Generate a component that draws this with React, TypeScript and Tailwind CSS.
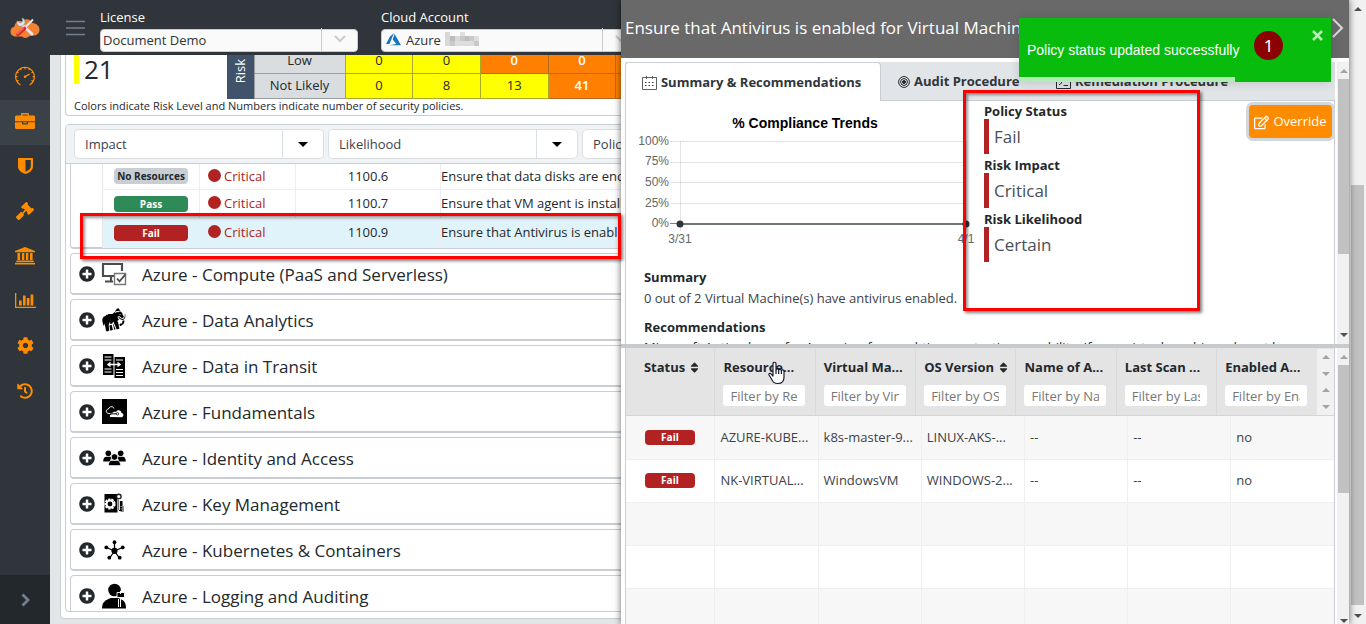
import React from "react";
import { SlSpeedometer } from "react-icons/sl";
import { FaGavel, FaCog, FaHistory, FaPlusCircle, FaRegEdit, FaSort } from "react-icons/fa";
import { GiMammoth } from "react-icons/gi";

const sans = "font-['Open_Sans','Noto_Sans',sans-serif]";

/* ---------- icons ---------- */

const Logo = () => (
  <svg width="30" height="22" viewBox="0 0 30 22" aria-hidden="true">
    <path d="M6 19.500C2 19.500.5 17 .5 14.500.5 12 2 10 4.500 9.500 5 5 9 3 12 4.500 14 1.500 20 1 22.500 6c4 .5 7 3 7 6.500 0 4-3 6-6 6l-4 .5c-2 2.500-6 2.500-7.500.5z" fill="#f58233" />
    <path d="M12.500 8l9.500 9" stroke="#dfe6ee" strokeWidth="3" strokeLinecap="round" />
    <path d="M7 4c-.5 4 2.500 6.500 6 4.500 3-2 2.500-6.500-1-7.500l.8 3.500-2.300 1.500z" fill="#dfe6ee" stroke="#8694a5" strokeWidth=".6" />
    <path d="M23 2.500l-8 8" stroke="#e9edf1" strokeWidth="1.800" />
    <path d="M14.500 11.500l-6.500 6" stroke="#e32b2b" strokeWidth="3.600" strokeLinecap="round" />
    <path d="M13.500 11.200l-6 5.500" stroke="#ffb0a8" strokeWidth=".8" strokeLinecap="round" />
  </svg>
);

const Briefcase = () => (
  <svg width="20" height="16" viewBox="0 0 20 16" fill="currentColor" aria-hidden="true">
    <path fillRule="evenodd" d="M6 2.500V1.200C6 .5 6.500 0 7.200 0h5.600c.7 0 1.200.5 1.200 1.200v1.300h4.500c.8 0 1.500.7 1.500 1.500v4.200H0V4c0-.8.7-1.500 1.500-1.500zM7.500 1.500v1h5v-1z" />
    <path fillRule="evenodd" d="M0 9.200h7v1.600c0 .4.300.7.700.7h4.600c.4 0 .7-.3.700-.7V9.200h7v5.300c0 .8-.7 1.500-1.500 1.500h-17C.7 16 0 15.300 0 14.500zM8.300 9.200h3.400v1.100H8.300z" />
  </svg>
);

const Shield = () => (
  <svg width="15" height="16" viewBox="0 0 15 16" fill="currentColor" aria-hidden="true">
    <path fillRule="evenodd" d="M.5 0h14c.3 0 .5.200.5.500v8c0 4-4 6.500-7.500 7.500C4 15 0 12.500 0 8.500v-8C0 .2.200 0 .5 0zM7.500 2v11.700c2.500-1 5.300-2.700 5.300-5.400V2z" />
  </svg>
);

const Bank = () => (
  <svg width="20" height="18" viewBox="0 0 20 18" fill="currentColor" aria-hidden="true">
    <path d="M10 0l10 4v1.200H0V4zM2.500 6h2.600v7H2.500zM6.900 6h2.400v7H6.900zM10.900 6h2.400v7h-2.400zM15 6h2.600v7H15zM1.300 13.500h17.400v1.500H1.300zM0 15.700h20v1.800H0z" />
  </svg>
);

const BarChart = () => (
  <svg width="21" height="15" viewBox="0 0 21 15" fill="currentColor" aria-hidden="true">
    <path d="M0 0h1.300v13.700H21V15H0zM4 7.500h2.700v5H4zM8 2.500h2.600v10H8zM11.800 5h2.600v7.500h-2.600zM15.600 1.500h2.700v11h-2.700z" />
  </svg>
);

const AzureMark = () => (
  <svg width="15" height="13" viewBox="0 0 15 13" aria-hidden="true">
    <path d="M8 0L3.800 3.800 0 11h3.500zM8.600 1L6.700 6.400l3.600 4.500-7 1.300H15z" fill="#1b75bc" />
  </svg>
);

const ComputeIcon = () => (
  <svg width="26" height="24" viewBox="0 0 26 24" fill="none" stroke="#4d4d4d" aria-hidden="true">
    <path d="M13 14H2V2h19v7" strokeWidth="2.200" />
    <path d="M10 14v5M4 19.500h8" strokeWidth="2.200" />
    <path d="M13.500 11.500h11v11h-11z" stroke="#777" strokeWidth="1.400" fill="#fff" />
    <path d="M16 16.500l2.500 2.800 6-7" strokeWidth="1.800" />
  </svg>
);

const TransitIcon = () => (
  <svg width="24" height="25" viewBox="0 0 24 25" aria-hidden="true">
    <path d="M1 1h10.500v21H1zM12.500 4H23v21H12.500z" fill="#000" />
    <path d="M2.500 4h7M2.500 7h7M2.500 16h7M2.500 19h7M14 7h7M14 16.500h7M14 19.500h7M14 22.500h7" stroke="#fff" strokeWidth="1.100" />
    <path d="M6 11.500h12M8.500 9.500L6 11.500 8.500 13.500M15.500 9.500l2.500 2-2.500 2" stroke="#fff" strokeWidth="1.500" fill="none" />
  </svg>
);

const FundamentalsIcon = () => (
  <svg width="25" height="25" viewBox="0 0 25 25" aria-hidden="true">
    <path d="M0 0h25v25H0z" fill="#000" />
    <path d="M8.500 18c-1.500-1-.5-2.500 1-2.800.5-2 2.500-3 4.500-2.200 1.500-3 5.500-1.500 5.500 1 2.500.5 2.500 3.700 0 4.200z" fill="#fff" />
    <path d="M10 14.500H6.500C3.500 14 3.500 10.500 6.500 10 7.500 7 11 7 12 9.500" stroke="#fff" strokeWidth="1" fill="none" />
    <path d="M8 14.800h6.500" stroke="#000" strokeWidth="1" />
    <circle cx="15.500" cy="14.800" r="1.200" fill="none" stroke="#000" strokeWidth=".8" />
  </svg>
);

const PeopleIcon = () => (
  <svg width="23" height="16" viewBox="0 0 23 16" aria-hidden="true">
    <circle cx="5.300" cy="3.300" r="2.800" />
    <circle cx="17.700" cy="3.300" r="2.800" />
    <path d="M.2 11.500c0-3.500 1.500-4.800 3-4.800h4.500c.6 0 1 .2 1.300.6-1.300 1-1.800 2.500-1.600 4.200zM22.800 11.500c0-3.500-1.500-4.800-3-4.800h-4.500c-.6 0-1 .2-1.300.6 1.300 1 1.800 2.500 1.600 4.200z" />
    <circle cx="11.500" cy="7" r="3.300" stroke="#fff" strokeWidth=".8" />
    <path d="M5.500 15.500c0-3.500 1.500-5 3.200-5h5.600c1.700 0 3.200 1.500 3.200 5z" stroke="#fff" strokeWidth=".6" />
  </svg>
);

const KeyIcon = () => (
  <svg width="22" height="21" viewBox="0 0 22 21" aria-hidden="true">
    <path d="M1.500 1h13v18.500h-13zM16 8h3.500v10H16z" fill="#000" />
    <circle cx="7" cy="11" r="4.300" fill="#000" stroke="#fff" strokeWidth="2.600" strokeDasharray="2.200 .8" />
    <circle cx="7" cy="11" r="3.400" fill="none" stroke="#fff" strokeWidth="2" />
    <circle cx="15.800" cy="3.500" r="2.300" fill="#fff" stroke="#222" strokeWidth="1.400" />
    <path d="M15.800 6.500V17" stroke="#fff" strokeWidth="2.200" />
    <path d="M15.500 6.500V17" stroke="#333" strokeWidth=".7" />
    <path d="M17.500 13.500h3v5h-3M17.500 16h3" stroke="#888" strokeWidth="1" fill="none" />
  </svg>
);

const HubIcon = () => (
  <svg width="21" height="20" viewBox="0 0 21 20" aria-hidden="true">
    <path d="M10.500 11V3M10.500 11L2.500 7.500M10.500 11l8-3.500M10.500 11L6 17.500M10.500 11l4.500 6.500" stroke="#000" strokeWidth="1.300" />
    <g fill="#000">
      <circle cx="10.500" cy="10.800" r="3.100" />
      <circle cx="10.500" cy="2.200" r="1.900" />
      <circle cx="2.300" cy="7.400" r="1.900" />
      <circle cx="18.700" cy="7.400" r="1.900" />
      <circle cx="5.300" cy="17.700" r="1.900" />
      <circle cx="15.700" cy="17.700" r="1.900" />
    </g>
  </svg>
);

const AuditorIcon = () => (
  <svg width="25" height="26" viewBox="0 0 25 26" aria-hidden="true">
    <circle cx="12.500" cy="7" r="6.300" fill="#000" />
    <path d="M0 25.500c0-6 3-8.500 9-10.500h7c6 2 8 4.500 8 10.500z" fill="#000" />
    <path d="M15 9.500h7.500v5H15z" fill="#000" stroke="#fff" strokeWidth=".9" />
    <path d="M18.500 8v3M16.500 16v8M18.500 16v8" stroke="#fff" strokeWidth="1" />
  </svg>
);

const GridIcon = () => (
  <svg width="15" height="14" viewBox="0 0 15 14" fill="none" stroke="#5a6066" aria-hidden="true">
    <path d="M.5 1.500h14v12H.5zM4.500 0v3M10.500 0v3" />
    <path d="M3 6.500h9M3 9.500h9" stroke="#2f353a" strokeDasharray="1.500 2" strokeWidth="1.200" />
  </svg>
);

const TargetIcon = () => (
  <svg width="12" height="12" viewBox="0 0 12 12" fill="none" stroke="#23282c" aria-hidden="true">
    <circle cx="6" cy="6" r="5.400" strokeWidth="1" />
    <circle cx="6" cy="6" r="3.400" strokeWidth="1" />
    <circle cx="6" cy="6" r="1.500" fill="#23282c" />
  </svg>
);

const TerminalIcon = () => (
  <svg width="15" height="13" viewBox="0 0 15 13" fill="none" stroke="#23282c" aria-hidden="true">
    <path d="M.5.500h14v12H.5zM3 4l3 2.500L3 9M7.500 9.500H12" />
  </svg>
);

const Chevron = () => (
  <svg width="12" height="8" viewBox="0 0 12 8" fill="none" stroke="#ccc" strokeWidth="2" aria-hidden="true">
    <path d="M1 1l5 5 5-5" />
  </svg>
);

const Tri = ({ up, color }: { up?: boolean; color: string }) => (
  <svg width="8" height="4" viewBox="0 0 8 4" fill={color} aria-hidden="true">
    <path d={up ? "M4 0l4 4H0z" : "M0 0h8L4 4z"} />
  </svg>
);

/* ---------- left side ---------- */

const navItems = [
  { name: "Dashboard", icon: <SlSpeedometer size={20} /> },
  { name: "Policies", icon: <Briefcase />, active: true },
  { name: "Security", icon: <Shield /> },
  { name: "Rules", icon: <FaGavel size={18} /> },
  { name: "Governance", icon: <Bank /> },
  { name: "Reports", icon: <BarChart /> },
  { name: "Settings", icon: <FaCog size={17} /> },
  { name: "History", icon: <FaHistory size={16} /> },
];

const Sidebar = () => (
  <nav className="flex w-[50px] shrink-0 flex-col bg-[#2f353a] text-[#ff8c00]">
    <div className="flex h-[55px] items-center justify-center">
      <Logo />
    </div>
    {navItems.map((n) => (
      <a
        key={n.name}
        href="#"
        aria-label={n.name}
        className={`flex h-[45px] items-center justify-center pb-1 ${n.active ? "bg-[#3a4248]" : ""}`}
      >
        {n.icon}
      </a>
    ))}
    <button aria-label="Expand menu" className="mt-auto flex h-[49px] items-center justify-center bg-[#23282c] text-[#73818f]">
      <svg width="9" height="14" viewBox="0 0 9 14" fill="none" stroke="currentColor" strokeWidth="2.800" aria-hidden="true"><path d="M1.500 1.500L7 7l-5.500 5.500" /></svg>
    </button>
  </nav>
);

const TopBar = () => (
  <header className="flex h-[55px] shrink-0 bg-[#2f353a] pl-4">
    <button aria-label="Toggle menu" className="flex w-[34px] items-center">
      <svg width="19" height="16" viewBox="0 0 19 16" stroke="#73818f" strokeWidth="1.400" aria-hidden="true"><path d="M0 1.500h19M0 8h19M0 14.500h19" /></svg>
    </button>
    <div className="flex gap-[23px] pt-2">
      <div className="w-[258px]">
        <label htmlFor="license" className="block text-[13px] leading-[19px] text-white">License</label>
        <div className="relative">
          <select id="license" className="h-[23px] w-full appearance-none rounded border border-[#ccc] bg-[#fafafa] px-0.5 text-[13px] leading-5 text-[#333]">
            <option>Document Demo</option>
          </select>
          <span className="pointer-events-none absolute inset-y-px right-px flex w-9 items-center justify-center border-l border-[#ccc]"><Chevron /></span>
        </div>
      </div>
      <div className="w-[258px]">
        <label htmlFor="account" className="block text-[13px] leading-[19px] text-white">Cloud Account</label>
        <div className="relative">
          <select id="account" className="h-[23px] w-full appearance-none rounded border border-[#ccc] bg-[#fafafa] pl-6 text-[13px] leading-5 text-[#333]">
            <option>Azure</option>
          </select>
          <span className="pointer-events-none absolute top-[6px] left-[5px]"><AzureMark /></span>
          <svg className="pointer-events-none absolute top-[5px] left-16" width="34" height="14" aria-hidden="true">
            <path d="M0 0h5v14H0zM10 4h5v5h-5z" fill="#d8d8d8" />
            <path d="M5 4h5v5H5zM20 4h4v5h-4z" fill="#bdbdbd" />
            <path d="M15 4h5v5h-5zM24 4h5v5h-5zM5 9h5v5H5zM29 9h5v5h-5z" fill="#c9c9c9" />
            <path d="M10 9h10v5H10zM15 0h5v4h-5zM29 4h5v5h-5zM20 9h9v5h-9z" fill="#dedede" />
          </svg>
          <span className="pointer-events-none absolute inset-y-px right-px flex w-9 items-center justify-center border-l border-[#ccc]"><Chevron /></span>
        </div>
      </div>
    </div>
  </header>
);

const matrix = [
  { label: "Low", cells: ["0", "0", "0", "0", "0"], hot: 2 },
  { label: "Not Likely", cells: ["0", "8", "13", "41", "12"], hot: 3 },
];

const RiskCard = () => (
  <section className="flex h-[61px] shrink-0 flex-col justify-end overflow-hidden rounded-b border border-t-0 border-[#c8ced3] pl-2">
    <div className="flex items-end">
      <div className="mb-[15px] h-[31px] w-[153px] border-l-[5px] border-[#ff0] pl-[5px] text-[26px] leading-[33px] text-[#23282c]">21</div>
      <table className="w-[457px] table-fixed border-collapse text-center text-[13px] text-[#23282c]">
        <colgroup>
          <col className="w-[27px]" />
          <col className="w-[91px]" />
        </colgroup>
        <tbody>
          {matrix.map((r, i) => (
            <tr key={r.label} className="h-[25px]">
              {i === 0 && (
                <th rowSpan={2} className="bg-[#40536a] p-0 font-normal text-white">
                  <span className="inline-block rotate-180 [writing-mode:vertical-rl]">Risk</span>
                </th>
              )}
              <th className="border border-[#9a9d9f] bg-[#dadde0] p-0 font-normal">{r.label}</th>
              {r.cells.map((c, j) => (
                <td
                  key={j}
                  className={`border p-0 ${j >= r.hot ? "border-[#b26b21] bg-[#ff8000] font-semibold text-white" : "border-[#a9a92a] bg-[#ff0]"}`}
                >
                  {c}
                </td>
              ))}
            </tr>
          ))}
        </tbody>
      </table>
    </div>
    <p className="pb-[3px] text-[11px] leading-[13px] text-[#23282c]">Colors indicate Risk Level and Numbers indicate number of security policies.</p>
  </section>
);

const FilterSelect = ({ name }: { name: string }) => (
  <div className="relative h-[30px] w-[250px] shrink-0">
    <select aria-label={name} className="h-[30px] w-full appearance-none rounded-[5px] border border-[#dcdfe2] bg-white px-2.5 pt-0.5 text-[13px] text-[#3c4248]">
      <option>{name}</option>
    </select>
    <span className="pointer-events-none absolute inset-y-px right-px flex w-[41px] items-center justify-center border-l border-[#dcdfe2]">
      <svg width="10" height="5" viewBox="0 0 10 5" aria-hidden="true"><path d="M0 0h10L5 5z" /></svg>
    </span>
  </div>
);

const policies = [
  { status: "No Resources", tone: "bg-[#c8ced3] text-[#23282c]", id: "1100.6", text: "Ensure that data disks are encrypted" },
  { status: "Pass", tone: "bg-[#2e8b57] text-white", id: "1100.7", text: "Ensure that VM agent is installed" },
  { status: "Fail", tone: "bg-[#b22222] text-white", id: "1100.9", text: "Ensure that Antivirus is enabled for Virtual Machines", on: true },
];

const groups = [
  { title: "Azure - Compute (PaaS and Serverless)", icon: <ComputeIcon /> },
  { title: "Azure - Data Analytics", icon: <GiMammoth size={27} color="#000" className="-rotate-12" /> },
  { title: "Azure - Data in Transit", icon: <TransitIcon /> },
  { title: "Azure - Fundamentals", icon: <FundamentalsIcon /> },
  { title: "Azure - Identity and Access", icon: <PeopleIcon /> },
  { title: "Azure - Key Management", icon: <KeyIcon /> },
  { title: "Azure - Kubernetes & Containers", icon: <HubIcon /> },
  { title: "Azure - Logging and Auditing", icon: <AuditorIcon /> },
];

const PolicyCard = () => (
  <section className="mt-2 flex min-h-0 flex-1 flex-col overflow-hidden rounded border border-[#c8ced3]">
    <div className="flex h-[39px] shrink-0 gap-1 border-b border-[#c8ced3] bg-[#f0f3f5] px-2 pt-1">
      <FilterSelect name="Impact" />
      <FilterSelect name="Likelihood" />
      <FilterSelect name="Policy Status" />
    </div>
    <div className="flex flex-col gap-1 pl-1">
      <div className="h-[85px] rounded-b border border-t-0 border-b-2 border-[#c8ced3] pl-[31px]">
        <table className="h-[84px] w-full table-fixed border-collapse border-l border-[#e5e7e9] text-[13px] text-[#23282c]">
          <tbody>
            {policies.map((p, i) => (
              <tr key={p.id} className={`border-b border-[#eceeef] ${i === 0 ? "h-[25px]" : "h-[29px]"} ${p.on ? "bg-[#e1f3fa]" : ""}`}>
                <td className="w-[97px] border-r border-[#eceeef] p-0 pl-[11px]">
                  <span className={`block h-4 w-[74px] rounded text-center text-[10px] leading-4 font-bold ${p.tone}`}>{p.status}</span>
                </td>
                <td className="w-24 border-r border-[#eceeef] p-0 pl-2 text-[#b22222]">
                  <span className="flex items-center gap-[3px]">
                    <span className="mb-0.5 size-[13px] rounded-full bg-[#b22222]" />
                    Critical
                  </span>
                </td>
                <td className="w-[145px] border-r border-[#eceeef] p-0 text-center">{p.id}</td>
                <td className="truncate p-0">{p.text}</td>
              </tr>
            ))}
          </tbody>
        </table>
      </div>
      {groups.map((g) => (
        <button key={g.title} className="flex h-[42px] shrink-0 items-center rounded border border-b-2 border-[#c8ced3] pl-2 text-left">
          <FaPlusCircle size={16} color="#23282c" />
          <span className="ml-[6px] flex w-[26px] justify-center">{g.icon}</span>
          <span className="ml-[15px] pt-0.5 text-[17px] text-[#23282c]">{g.title}</span>
        </button>
      ))}
    </div>
  </section>
);

/* ---------- detail panel ---------- */

const TrendChart = () => (
  <svg width="345" height="140" viewBox="0 0 345 140" role="img" aria-label="% Compliance Trends" fontFamily="Liberation Sans, Arial, sans-serif">
    <text x="171" y="18" fontSize="14" fontWeight="700" textAnchor="middle" fill="#000">% Compliance Trends</text>
    <g stroke="#000" strokeOpacity=".11">
      <path d="M36 31.500h296M36 52.500h296M36 72.500h296M36 93.500h296M46.500 31v90M332.500 31v90" />
    </g>
    <path d="M36 113.500h296" stroke="#7c7f80" />
    <path d="M46 114h286" stroke="#6f7476" strokeWidth="2" />
    <g fontSize="12" fill="#666" textAnchor="end">
      <text x="35" y="35">100%</text>
      <text x="35" y="55">75%</text>
      <text x="35" y="76">50%</text>
      <text x="35" y="97">25%</text>
      <text x="35" y="117">0%</text>
    </g>
    <g fontSize="12" fill="#666" textAnchor="middle">
      <text x="46" y="133">3/31</text>
      <text x="332" y="133">4/1</text>
    </g>
    <circle cx="46" cy="114" r="3.500" fill="#2f353a" />
    <circle cx="332" cy="114" r="3.500" fill="#2f353a" />
  </svg>
);

const facts = [
  ["Policy Status", "Fail"],
  ["Risk Impact", "Critical"],
  ["Risk Likelihood", "Certain"],
];

const ScrollBar = ({ top, thumb, tail = 7 }: { top: string; thumb: string; tail?: number }) => (
  <div className="flex w-3 shrink-0 flex-col items-end bg-[#f1f1f1]" aria-hidden="true">
    <div className={`flex w-[11px] items-center justify-center ${top}`}><Tri up color="#a3a3a3" /></div>
    <div className={`w-[11px] bg-[#c1c1c1] ${thumb}`} />
    <div className={`mt-auto flex w-[11px] justify-center ${tail === 7 ? "pb-[7px]" : "pb-px"}`}><Tri color="#505050" /></div>
  </div>
);

const columns = ["Status", "Resource Name", "Virtual Machine", "OS Version", "Name of Antivirus", "Last Scan Date", "Enabled Antivirus"];
const shown = ["Status", "Resource...", "Virtual Ma...", "OS Version", "Name of A...", "Last Scan ...", "Enabled A..."];
const resources = [
  ["AZURE-KUBE...", "k8s-master-9...", "LINUX-AKS-...", "--", "--", "no"],
  ["NK-VIRTUAL...", "WindowsVM", "WINDOWS-2...", "--", "--", "no"],
  ["", "", "", "", "", ""],
  ["", "", "", "", "", ""],
  ["", "", "", "", "", ""],
];

const ResourceTable = () => (
  <div className="min-w-0 flex-1 overflow-hidden border-x border-[#c8ced3]">
    <div className="flex h-[68px] border-b border-[#d5d5d5] bg-[#e4e4e4] pt-px">
      <div className="min-w-0 flex-1">
        <table className="h-full w-full table-fixed border-collapse text-[13px]">
          <colgroup>
            <col className="w-[89px]" />
          </colgroup>
          <thead>
            <tr>
              {shown.map((c, i) => (
                <th key={c} className={`p-0 pt-2 text-left align-top font-bold whitespace-nowrap text-[#23282c] ${i === 0 ? "pl-[18px]" : "border-l border-[#d9d9d9] pl-2"}`}>
                  <span className="flex items-center leading-5">
                    {c}
                    {(i === 0 || i === 3) && <FaSort size={13} className="ml-[3px] shrink-0" />}
                  </span>
                  {i > 0 && (
                    <input
                      aria-label={`Filter by ${columns[i]}`}
                      placeholder={`Filter by ${columns[i]}`}
                      className="mt-2 block h-[21px] w-[82px] rounded-[3px] bg-white px-[7px] text-[13px] font-normal placeholder:text-[#777]"
                    />
                  )}
                </th>
              ))}
            </tr>
          </thead>
        </table>
      </div>
      <div className="flex w-[17px] flex-col items-center justify-around bg-[#f1f1f1]" aria-hidden="true">
        <Tri up color="#a3a3a3" />
        <Tri color="#a3a3a3" />
        <Tri up color="#a3a3a3" />
        <Tri color="#a3a3a3" />
      </div>
    </div>
    <table className="w-full table-fixed border-collapse text-[13px] text-[#3c4248]">
      <colgroup>
        <col className="w-[89px]" />
      </colgroup>
      <tbody>
        {resources.map((r, i) => (
          <tr key={i} className={`h-[43px] border-b border-[#efefef] ${i % 2 ? "bg-white" : "bg-[#f7f7f7]"}`}>
            <td className="p-0 pl-[19px]">
              {r[0] && <span className="block h-[15px] w-[50px] rounded bg-[#b22222] text-center text-[10px] leading-[15px] font-bold text-white">Fail</span>}
            </td>
            {r.map((c, j) => (
              <td key={j} className="overflow-hidden border-l border-[#efefef] p-0 pl-[5px] whitespace-nowrap">{c}</td>
            ))}
          </tr>
        ))}
      </tbody>
    </table>
  </div>
);

const tab = "flex items-center pt-0.5 text-[13px] font-bold text-[#2f353a]";

const DetailPanel = () => (
  <aside className="absolute inset-y-0 right-[17px] flex w-[53.300%] flex-col bg-white shadow-[0_0_7px_rgba(0,0,0,0.6)]">
    <header className="flex h-[58px] shrink-0 items-center justify-between bg-[#696969] pr-[5px] pb-[3px] pl-1 text-white">
      <h2 className="text-[17px] whitespace-nowrap">Ensure that Antivirus is enabled for Virtual Machines</h2>
      <button aria-label="Close panel">
        <svg width="12" height="20" viewBox="0 0 12 20" fill="none" stroke="#d8d8d8" strokeWidth="2"><path d="M1 1l9 9-9 9" /></svg>
      </button>
    </header>
    <div className="flex h-[286px] shrink-0 pt-1 pl-1">
      <div className="min-w-0 flex-1 overflow-hidden">
        <div role="tablist" className="flex h-[39px] bg-[#e1e5e8]">
          <button role="tab" aria-selected="true" className={`${tab} w-64 gap-1 rounded-t border border-b-0 border-[#c8ced3] bg-white pl-4`}><GridIcon />Summary &amp; Recommendations</button>
          <button role="tab" className={`${tab} w-[158px] gap-1 border-b border-[#c8ced3] pl-[17px]`}><TargetIcon />Audit Procedure</button>
          <button role="tab" className={`${tab} flex-1 gap-1 border-b border-[#c8ced3] pl-[17px]`}><TerminalIcon />Remediation Procedure</button>
        </div>
        <div className="flex h-full justify-between border-x border-[#c8ced3] pl-2">
          <div className="w-[345px] shrink-0 pt-[9px]">
            <TrendChart />
            <div className="mt-[17px] pl-2.5 text-[13px] whitespace-nowrap text-[#23282c]">
              <h3 className="leading-5 font-bold">Summary</h3>
              <p className="mt-px leading-5 text-[#3c4248]">0 out of 2 Virtual Machine(s) have antivirus enabled.</p>
              <h3 className="mt-[9px] leading-5 font-bold">Recommendations</h3>
              <p className="leading-5">Microsoft Antimalware for Azure is a free real-time protection capability. If your virtual machines do not have any</p>
            </div>
          </div>
          <dl className="ml-[5px] flex-1 pt-px">
            {facts.map(([k, v]) => (
              <div key={k}>
                <dt className="text-[13px] leading-[19px] font-bold text-[#23282c]">{k}</dt>
                <dd className="-mt-0.5 mb-0.5 h-[35px] border-l-[5px] border-[#b22222] pl-[5px] text-[17px] leading-9 text-[#4a5056]">{v}</dd>
              </div>
            ))}
          </dl>
          <button className="mt-1 mr-[2px] flex h-[33px] w-[83px] shrink-0 items-center justify-center gap-1 rounded bg-[#ff8c00] pt-px text-[13px] text-white ring-[3px] ring-[#d3d7db]">
            <FaRegEdit size={15} />Override
          </button>
        </div>
      </div>
      <div className="w-0.5 shrink-0" />
      <ScrollBar top="h-[17px]" thumb="h-[175px]" />
    </div>
    <div className="h-1 shrink-0 bg-[#c8cbce]" />
    <div className="flex min-h-0 flex-1 pl-1">
      <ResourceTable />
      <div className="w-0.5 shrink-0" />
      <ScrollBar top="h-[17px]" thumb="h-[128px]" tail={1} />
    </div>
  </aside>
);

const Toast = () => (
  <div role="status" className="absolute top-[18px] right-[35px] flex h-16 w-[312px] items-center bg-[#07bc0c] pl-2 font-['Liberation_Sans',Arial,sans-serif] text-[14px] text-white shadow-[0_1px_10px_rgba(0,0,0,0.15)]">
    Policy status updated successfully
    <button aria-label="Dismiss" className="absolute top-3 right-2 text-[#b9eebb]">
      <svg width="11" height="11" viewBox="0 0 11 11" stroke="currentColor" strokeWidth="2.500"><path d="M1 1l9 9M10 1l-9 9" /></svg>
    </button>
    <span className="absolute bottom-0 left-0 h-[5px] w-[216px] bg-[#b3ebb4]" />
    <span className="absolute top-[13px] right-12 flex size-[29px] items-center justify-center rounded-full bg-[#8b0000] font-['Noto_Sans','Open_Sans',sans-serif] text-[17px]">1</span>
  </div>
);

export default function App() {
  return (
    <div className={`relative flex h-screen overflow-hidden bg-[#e4e5e6] ${sans}`}>
      <Sidebar />
      <div className="flex min-w-0 flex-1 flex-col">
        <TopBar />
        <main className="flex min-h-0 flex-1 flex-col px-[10px] pb-[5px]">
          <div className="flex min-h-0 flex-1 flex-col rounded-b border border-t-0 border-[#c8ced3] bg-white px-1 pb-[6px]">
            <RiskCard />
            <PolicyCard />
          </div>
        </main>
      </div>
      <div className="flex w-[17px] shrink-0 flex-col items-center bg-[#f1f1f1]" aria-hidden="true">
        <div className="pt-[7px]"><Tri up color="#505050" /></div>
        <div className="mt-[174px] h-[420px] w-[13px] bg-[#c1c1c1]" />
        <div className="mt-auto pb-[6px]"><Tri color="#505050" /></div>
      </div>

      <DetailPanel />

      <div className="pointer-events-none absolute top-[213px] left-[80px] h-[46px] w-[541px] border-[3px] border-[#f00] shadow-[2px_2px_3px_rgba(0,0,0,0.5),inset_2px_2px_3px_rgba(0,0,0,0.4)]" />
      <div className="pointer-events-none absolute top-[90px] left-[963px] h-[221px] w-[237px] border-[3px] border-[#f00] shadow-[2px_2px_3px_rgba(0,0,0,0.5),inset_2px_2px_3px_rgba(0,0,0,0.4)]" />
      <Toast />
      <svg className="pointer-events-none absolute top-[361px] left-[768px]" width="18" height="24" viewBox="0 0 18 24" fill="#fff" stroke="#1a1a2e" strokeWidth="1.200" strokeLinejoin="round" aria-hidden="true">
        <path d="M5 15V2.500C5 .8 8 .8 8 2.500V9c0-1.500 2.700-1.500 2.700.3 0-1.500 2.700-1.300 2.700.5 0-1.300 2.600-1.200 2.600.5V16c0 4-2 6.500-6 6.500S5 21 3.500 18L1 14c-.5-1.200 1-2.200 2-1.200z" />
        <path d="M8 9v4M10.700 9.500V13M13.400 10v3" />
      </svg>
    </div>
  );
}
